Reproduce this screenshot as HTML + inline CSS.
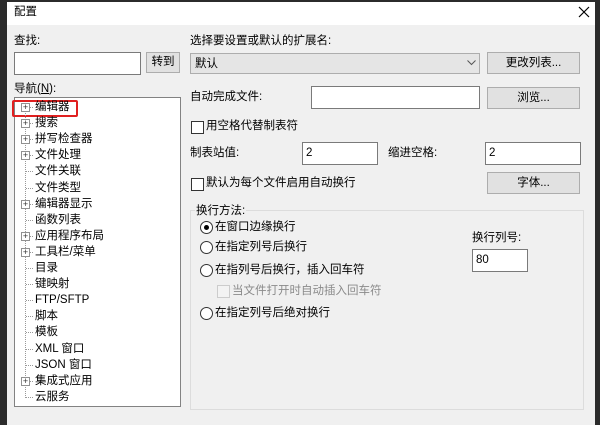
<!DOCTYPE html>
<html><head><meta charset="utf-8"><style>
*{margin:0;padding:0;box-sizing:border-box}
body{width:600px;height:425px;overflow:hidden;background:#2b2b2b;font-family:"Liberation Sans","Noto Sans CJK SC",sans-serif;font-size:11.5px;color:#000;position:relative}
.a{position:absolute}
.dlg{position:absolute;left:7px;top:2px;width:588px;height:423px;background:#f0f0f0}
.title{position:absolute;left:7px;top:2px;width:588px;height:23px;background:#fff}
.t{position:absolute;white-space:nowrap;line-height:14px}
.inp{position:absolute;background:#fff;border:1px solid #7a7a7a}
.btn{position:absolute;background:#e1e1e1;border:1px solid #adadad;text-align:center;line-height:19px}
.cb{position:absolute;width:13px;height:13px;border:1px solid #333;background:#fff}
.rb{position:absolute;width:13px;height:13px;border:1px solid #333;border-radius:50%;background:#fff}
.pl{position:absolute;width:9px;height:9px;border:1px solid #919191;background:#fff;font-size:9px;line-height:7px;text-align:center;color:#333}
</style></head><body>
<div class="dlg"></div>
<div class="title"></div>
<div class="t" style="left:14px;top:5px">配置</div>
<svg class="a" style="left:578px;top:6px" width="12" height="12"><path d="M1 1L11 11M11 1L1 11" stroke="#000" stroke-width="1.2"/></svg>

<div class="t" style="left:14px;top:34px">查找:</div>
<div class="inp" style="left:14px;top:52px;width:127px;height:23px"></div>
<div class="btn" style="left:146px;top:52px;width:34px;height:21px">转到</div>
<div class="t" style="left:14px;top:82px">导航(<u>N</u>):</div>
<div class="inp" style="left:14px;top:97px;width:167px;height:310px;border-color:#828282"></div>
<div class="a" style="left:12px;top:100px;width:66px;height:17px;border:2px solid #e02020;border-radius:2px"></div>
<div class="a" style="left:25px;top:107px;width:0;height:291px;border-left:1px dotted #999"></div>
<div id="tree"></div>

<div class="t" style="left:190px;top:34px">选择要设置或默认的扩展名:</div>
<div class="a" style="left:190px;top:53px;width:290px;height:21px;background:#e5e5e5;border:1px solid #adadad"></div>
<div class="t" style="left:195px;top:57px">默认</div>
<svg class="a" style="left:467px;top:60px" width="9" height="6"><path d="M0.5 0.5L4.5 4.5L8.5 0.5" stroke="#555" fill="none"/></svg>
<div class="btn" style="left:487px;top:52px;width:93px;height:22px;line-height:20px">更改列表...</div>

<div class="t" style="left:190px;top:90px">自动完成文件:</div>
<div class="inp" style="left:311px;top:86px;width:169px;height:23px"></div>
<div class="btn" style="left:487px;top:87px;width:93px;height:22px;line-height:20px">浏览...</div>

<div class="cb" style="left:191px;top:121px"></div>
<div class="t" style="left:206px;top:119px">用空格代替制表符</div>

<div class="t" style="left:190px;top:146px">制表站值:</div>
<div class="inp" style="left:302px;top:142px;width:76px;height:23px"></div>
<div class="t" style="left:306px;top:146px">2</div>
<div class="t" style="left:388px;top:146px">缩进空格:</div>
<div class="inp" style="left:485px;top:142px;width:96px;height:23px"></div>
<div class="t" style="left:489px;top:146px">2</div>

<div class="cb" style="left:191px;top:178px"></div>
<div class="t" style="left:206px;top:176px">默认为每个文件启用自动换行</div>
<div class="btn" style="left:487px;top:172px;width:93px;height:22px;line-height:20px">字体...</div>

<div class="a" style="left:190px;top:210px;width:394px;height:200px;border:1px solid #dcdcdc"></div>
<div class="t" style="left:195px;top:204px;background:#f0f0f0;padding:0 1px">换行方法:</div>
<div class="rb" style="left:200px;top:221px"></div>
<div class="a" style="left:204px;top:225px;width:5px;height:5px;border-radius:50%;background:#000"></div>
<div class="t" style="left:215px;top:220px">在窗口边缘换行</div>
<div class="rb" style="left:200px;top:241px"></div>
<div class="t" style="left:215px;top:240px">在指定列号后换行</div>
<div class="rb" style="left:200px;top:264px"></div>
<div class="t" style="left:215px;top:263px">在指列号后换行，插入回车符</div>
<div class="cb" style="left:217px;top:285px;border-color:#ccc;background:#f3f3f3"></div>
<div class="t" style="left:232px;top:284px;color:#8a8a8a">当文件打开时自动插入回车符</div>
<div class="rb" style="left:200px;top:307px"></div>
<div class="t" style="left:215px;top:306px">在指定列号后绝对换行</div>
<div class="t" style="left:472px;top:231px">换行列号:</div>
<div class="inp" style="left:472px;top:249px;width:56px;height:23px"></div>
<div class="t" style="left:476px;top:253px">80</div>

<script>
var items=[["编辑器",1],["搜索",1],["拼写检查器",1],["文件处理",1],["文件关联",0],["文件类型",0],["编辑器显示",1],["函数列表",0],["应用程序布局",1],["工具栏/菜单",1],["目录",0],["键映射",0],["FTP/SFTP",0],["脚本",0],["模板",0],["XML 窗口",0],["JSON 窗口",0],["集成式应用",1],["云服务",0]];
var h="";items.forEach(function(it,i){var y=107+16.1*i;
h+='<div class="a" style="left:26px;top:'+y+'px;width:7px;border-top:1px dotted #999"></div>';
if(it[1])h+='<div class="pl" style="left:21px;top:'+(y-4)+'px">+</div>';
h+='<div class="t" style="left:35px;top:'+(y-7)+'px">'+it[0]+'</div>';});
document.getElementById("tree").innerHTML=h;
</script>
</body></html>
